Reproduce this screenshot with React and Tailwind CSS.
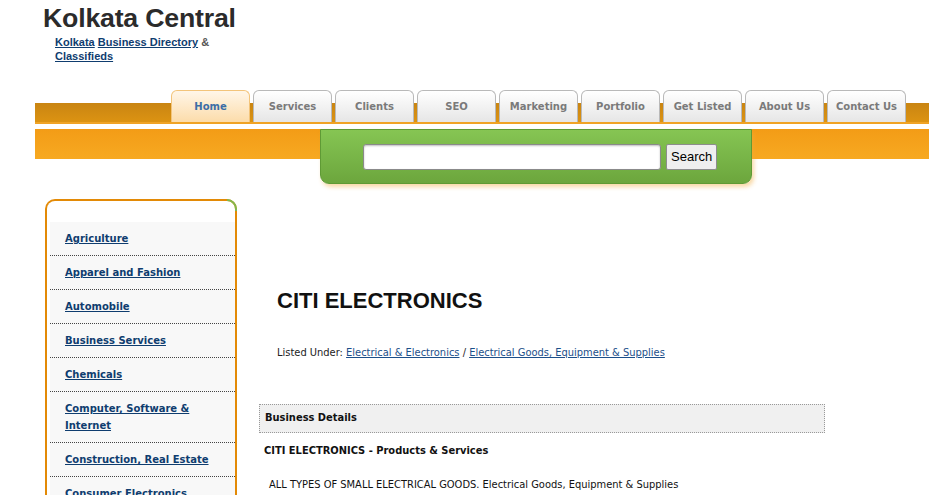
const tabs = ["Home", "Services", "Clients", "SEO", "Marketing", "Portfolio", "Get Listed", "About Us", "Contact Us"];

const categories = [
  "Agriculture",
  "Apparel and Fashion",
  "Automobile",
  "Business Services",
  "Chemicals",
  "Computer, Software & Internet",
  "Construction, Real Estate",
  "Consumer Electronics",
];

const verdana = "font-['DejaVu_Sans',Verdana,sans-serif]";
const tahoma = "font-['DejaVu_Sans_Condensed','Liberation_Sans',sans-serif]";

export default function App() {
  return (
    <div className="min-h-[495px] bg-white font-['Liberation_Sans',Arial,sans-serif] overflow-hidden">
      {/* header */}
      <div className="pl-[43px] pt-[3px]">
        <h1 className="text-[26.7px] font-bold leading-[30px] text-[#2b2b2b] tracking-[-0.2px]">Kolkata Central</h1>
        <p className="ml-[12px] mt-[2px] w-[170px] text-[11px] font-bold leading-[14px] text-[#555]">
          <a href="#" className="text-[#0f3d6f] underline">Kolkata</a>{" "}
          <a href="#" className="text-[#0f3d6f] underline">Business Directory</a> &amp;{" "}
          <a href="#" className="text-[#0f3d6f] underline">Classifieds</a>
        </p>
      </div>

      {/* nav band */}
      <div className="ml-[35px] mt-[40px] h-[52px] border-b border-[#c47c10]">
        <div className="h-[19px] flex items-end bg-gradient-to-b from-[#c98512] to-[#dc9312]">
          <div className="ml-[136px] flex gap-[3px] h-[32px] shrink-0">
            {tabs.map((t, i) => (
              <div
                key={t}
                className={
                  "w-[79px] h-[32px] rounded-t-[6px] border border-b-0 flex items-center justify-center text-[10px] font-bold " +
                  verdana +
                  (i === 0
                    ? " bg-gradient-to-b from-[#fff6e8] to-[#fcdcaa] border-[#f3c47a] text-[#3c6ea6]"
                    : " bg-gradient-to-b from-[#ffffff] to-[#e6e6e6] border-[#b9b9b9] text-[#7a7a7a]")
                }
              >
                {t}
              </div>
            ))}
          </div>
        </div>
        <div className="h-[2px] bg-[#f0a325]" />
        <div className="h-[30px] bg-gradient-to-b from-[#f39c16] to-[#f7a921]">
          <div className="ml-[285px] mt-[5px] w-[432px] h-[55px] rounded-b-[9px] border border-[#5f9a35] bg-gradient-to-b from-[#86c553] to-[#6ca63d] shadow-[2px_3px_4px_rgba(240,170,60,0.45)] flex items-center gap-[5px] pl-[42px]">
            <input
              type="text"
              className="w-[298px] h-[26px] bg-white border border-[#8a8a8a] rounded-[3px] shadow-[inset_0_1px_2px_rgba(0,0,0,0.25)]"
            />
            <button className="h-[26px] px-[4px] border border-[#8d8d8d] rounded-[2px] bg-[#efefef] text-[13px] text-black font-['Liberation_Sans',Arial,sans-serif]">
              Search
            </button>
          </div>
        </div>
      </div>

      {/* body */}
      <div className="flex mt-[44px]">
        <aside className="ml-[45px] w-[192px] shrink-0 border-2 border-b-0 border-[#e38a06] rounded-t-[10px] pt-[21px] pl-[3px] relative">
          <div className="absolute -top-[2px] -right-[2px] w-[10px] h-[12px] border-t-2 border-r-2 border-[#80b84d] rounded-tr-[10px]" />
          <ul className="bg-[#f8f8f8]">
            {categories.map((c) => (
              <li key={c} className={"border-b border-dotted border-[#444] pl-[15px] pr-[10px] py-[8px] text-[10px] leading-[17px] " + verdana}>
                <a href="#" className="font-bold text-[#0f3d6f] underline">
                  {c}
                </a>
              </li>
            ))}
          </ul>
        </aside>

        <main className="ml-[22px] flex-1 pt-[89px]">
          <h2 className="ml-[18px] text-[22px] font-bold leading-[26px] text-[#111]">CITI ELECTRONICS</h2>
          <p className={"ml-[18px] mt-[31px] text-[11px] text-[#222] " + tahoma}>
            Listed Under:{" "}
            <a href="#" className="text-[#1c4f8a] underline">Electrical &amp; Electronics</a> /{" "}
            <a href="#" className="text-[#1c4f8a] underline">Electrical Goods, Equipment &amp; Supplies</a>
          </p>
          <div className="mt-[42px] w-[566px] h-[29px] border border-dotted border-[#999] bg-[#f0f0f0] flex items-center pl-[5px]">
            <span className={"text-[11px] font-bold text-[#111] " + tahoma}>Business Details</span>
          </div>
          <p className={"ml-[5px] mt-[10px] text-[11px] font-bold text-[#111] " + tahoma}>
            CITI ELECTRONICS - Products &amp; Services
          </p>
          <p className={"ml-[10px] mt-[18px] text-[11px] text-[#111] " + tahoma}>
            ALL TYPES OF SMALL ELECTRICAL GOODS. Electrical Goods, Equipment &amp; Supplies
          </p>
        </main>
      </div>
    </div>
  );
}
